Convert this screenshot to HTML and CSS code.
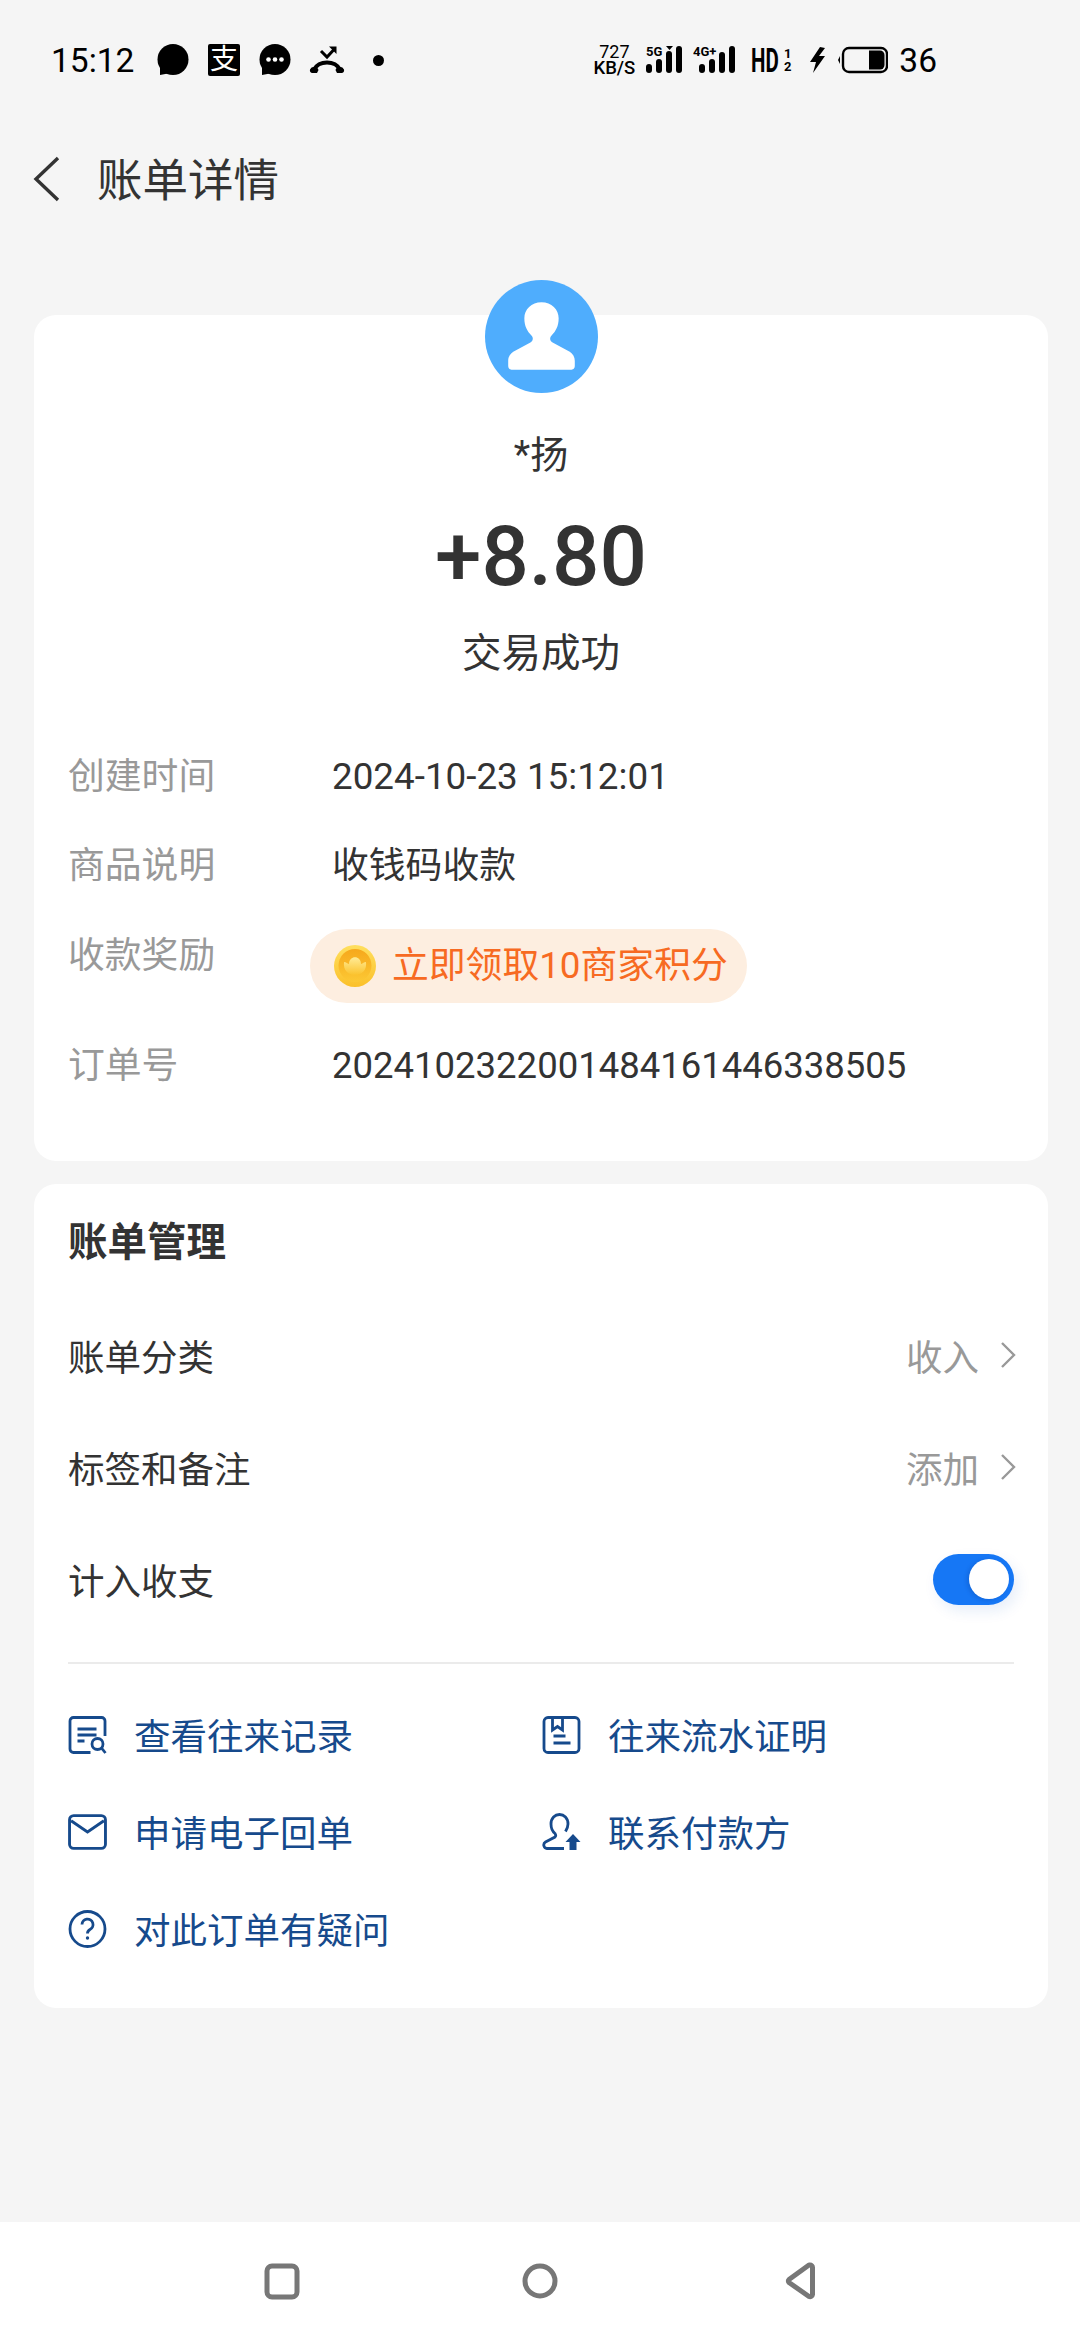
FILE: index.html
```html
<!DOCTYPE html>
<html lang="zh-CN">
<head>
  <meta charset="utf-8">
  <title>账单详情</title>
  <link rel="stylesheet" href="styles.css">
</head>
<body>
<div class="page">

  <!-- status bar -->
  <div class="status-bar">
    <div class="status-left">
      <span class="clock">15:12</span>
      <svg class="st-bubble" viewBox="0 0 32 32"><circle cx="16" cy="15.5" r="15.5"/><path d="M3 22 L3 31 L11 29.5 Z"/></svg>
      <span class="st-alipay">支</span>
      <svg class="st-chat" viewBox="0 0 32 32"><circle cx="16" cy="15.5" r="15.5"/><path d="M3 22 L3 31 L11 29.5 Z"/><circle cx="9.5" cy="15.5" r="2.3" fill="#fff"/><circle cx="16" cy="15.5" r="2.3" fill="#fff"/><circle cx="22.5" cy="15.5" r="2.3" fill="#fff"/></svg>
      <svg class="st-call" viewBox="0 0 36 28"><path d="M5 24 C9 14 27 14 31 24" fill="none" stroke="#000" stroke-width="4.2"/><path d="M1 23.5 a4.5 4.5 0 0 1 8.5 0.5 l-1.5 3 h-5 a3 3 0 0 1 -2 -3.5 z M26.5 24 a4.5 4.5 0 0 1 8.5 -0.5 a3 3 0 0 1 -2 3.5 h-5 z"/><path d="M12 5 L18 11 L25 3.5" fill="none" stroke="#000" stroke-width="3"/><path d="M20 0.5 H27.5 V8 Z"/></svg>
      <span class="st-dot"></span>
    </div>
    <div class="status-right">
      <div class="speed"><span class="speed-num">727</span><span class="speed-unit">KB/S</span></div>
      <svg class="signal" viewBox="0 0 37 30">
        <text x="0" y="11" class="sig-text">5G</text>
        <path d="M20 1h7l-3.5 4z"/>
        <rect x="0" y="19" width="6" height="9" rx="3"/><rect x="10" y="14" width="6" height="14" rx="3"/><rect x="20" y="6" width="6" height="22" rx="3"/><rect x="30" y="1" width="6" height="27" rx="3"/>
      </svg>
      <svg class="signal signal-4g" viewBox="0 0 43 30">
        <text x="0" y="11" class="sig-text">4G+</text>
        <rect x="6" y="19" width="6" height="9" rx="3"/><rect x="16" y="14" width="6" height="14" rx="3"/><rect x="26" y="7" width="6" height="21" rx="3"/><rect x="36" y="1" width="6" height="27" rx="3"/>
      </svg>
      <div class="hd"><span class="hd-text">HD</span><span class="hd-sims"><span>1</span><span>2</span></span></div>
      <svg class="bolt" viewBox="0 0 17 26"><path d="M11 0 L1 15 H7 L4 26 L16 9 H10 L16 1 Z"/></svg>
      <svg class="battery" viewBox="0 0 51 28">
        <path d="M3 10 L1 14 L3 18 Z"/>
        <rect x="6" y="2" width="44" height="24" rx="6" fill="none" stroke="#000" stroke-width="2.4"/>
        <path d="M32 4.5 H43 a4.5 4.5 0 0 1 4.5 4.5 V19 a4.5 4.5 0 0 1 -4.5 4.5 H32 Z"/>
      </svg>
      <span class="battery-num">36</span>
    </div>
  </div>

  <!-- title bar -->
  <div class="title-bar">
    <svg class="back" viewBox="0 0 28 46"><path d="M25 2 L3 23 L25 44" fill="none" stroke="#333" stroke-width="3.4"/></svg>
    <h1>账单详情</h1>
  </div>

  <!-- transaction summary -->
  <div class="card card-summary">
    <svg class="avatar" viewBox="0 0 112 112">
      <circle cx="56" cy="56" r="56" fill="#4fadfd"/>
      <path fill="#fff" d="M56 22 C46 22 39 29 39 38 C39 46 42 51 46 55 C48 57 48 60 45 62 L28 71 C25 73 23 76 23 80 V85 C23 88 25 89 27 89 H85 C87 89 89 88 89 85 V80 C89 76 87 73 84 71 L67 62 C64 60 64 57 66 55 C70 51 73 46 73 38 C73 29 66 22 56 22 Z"/>
    </svg>
    <div class="payer">*扬</div>
    <div class="amount">+8.80</div>
    <div class="result">交易成功</div>

    <div class="info-row info-first">
      <span class="info-label">创建时间</span>
      <span class="info-value">2024-10-23 15:12:01</span>
    </div>
    <div class="info-row">
      <span class="info-label">商品说明</span>
      <span class="info-value">收钱码收款</span>
    </div>
    <div class="info-row info-reward">
      <span class="info-label">收款奖励</span>
      <span class="reward-pill">
        <svg class="coin" viewBox="0 0 42 42">
          <defs>
            <linearGradient id="coinRim" x1="0" y1="0" x2="0" y2="1"><stop offset="0" stop-color="#ffdf5e"/><stop offset="1" stop-color="#fbc02a"/></linearGradient>
            <linearGradient id="coinFace" x1="0" y1="0" x2="0" y2="1"><stop offset="0" stop-color="#f6a81c"/><stop offset="1" stop-color="#fcc834"/></linearGradient>
            <linearGradient id="ingot" x1="0" y1="0" x2="0" y2="1"><stop offset="0" stop-color="#ffeb96"/><stop offset="1" stop-color="#fbc32e"/></linearGradient>
          </defs>
          <circle cx="21" cy="21" r="21" fill="url(#coinRim)"/>
          <circle cx="21" cy="20.5" r="16.5" fill="url(#coinFace)"/>
          <path fill="url(#ingot)" d="M10 17 C12 17 14 19 15 19 C15 10 27 10 27 19 C28 19 30 17 32 17 C33 25 28 30 21 30 C14 30 9 25 10 17 Z"/>
        </svg>
        <span class="reward-text">立即领取10商家积分</span>
      </span>
    </div>
    <div class="info-row info-order">
      <span class="info-label">订单号</span>
      <span class="order-no">2024102322001484161446338505</span>
    </div>
  </div>

  <!-- bill management -->
  <div class="card card-manage">
    <h2>账单管理</h2>
    <div class="manage-row">
      <span>账单分类</span>
      <span class="manage-right">收入<svg class="chev" viewBox="0 0 16 28"><path d="M2 2 L14 14 L2 26" fill="none" stroke="#999" stroke-width="2.4"/></svg></span>
    </div>
    <div class="manage-row">
      <span>标签和备注</span>
      <span class="manage-right">添加<svg class="chev" viewBox="0 0 16 28"><path d="M2 2 L14 14 L2 26" fill="none" stroke="#999" stroke-width="2.4"/></svg></span>
    </div>
    <div class="manage-row">
      <span>计入收支</span>
      <span class="toggle"><span class="toggle-knob"></span></span>
    </div>

    <div class="divider"></div>

    <div class="links">
      <div class="link">
        <svg class="link-icon" viewBox="0 0 38 38" fill="none" stroke="#164a8c" stroke-width="2.8">
          <path d="M36.5 20 V5 a3.5 3.5 0 0 0 -3.5 -3.5 H5 a3.5 3.5 0 0 0 -3.5 3.5 V33 a3.5 3.5 0 0 0 3.5 3.5 H22"/>
          <path d="M9 13 H28 M9 19 H28 M9 25 H16"/>
          <circle cx="29" cy="28" r="5.5"/>
          <path d="M33 32 L37 37"/>
        </svg>
        <span>查看往来记录</span>
      </div>
      <div class="link">
        <svg class="link-icon" viewBox="0 0 38 38" fill="none" stroke="#164a8c" stroke-width="2.8">
          <rect x="1.5" y="1.5" width="35" height="35" rx="4"/>
          <path d="M10 2 V14 L15 10.5 L20 14 V2"/>
          <path d="M11 20 H23 M11 27 H28"/>
        </svg>
        <span>往来流水证明</span>
      </div>
      <div class="link">
        <svg class="link-icon" viewBox="0 0 38 36" fill="none" stroke="#164a8c" stroke-width="2.8">
          <rect x="1.5" y="2" width="35" height="32" rx="4"/>
          <path d="M3 7 L19 18 L35 7"/>
        </svg>
        <span>申请电子回单</span>
      </div>
      <div class="link">
        <svg class="link-icon" viewBox="0 0 39 38" fill="none" stroke="#164a8c" stroke-width="2.8">
          <path d="M22 35.5 H5 a3.5 3.5 0 0 1 -1.5 -6.5 L13 24 c1 -1 1 -2 0 -3.5 C10 18 9 14 9 11 C9 5 13 1.5 17.5 1.5 C22 1.5 26 5 26 11 c0 3 -1 5 -2.5 7.5"/>
          <path fill="#164a8c" stroke="none" d="M31 21 L38.5 29 H34.5 V37 H27.5 V29 H23.5 Z"/>
        </svg>
        <span>联系付款方</span>
      </div>
      <div class="link">
        <svg class="link-icon" viewBox="0 0 38 38" fill="none" stroke="#164a8c" stroke-width="2.8">
          <circle cx="19" cy="19" r="17.5"/>
          <path d="M13.5 14.5 a5.5 5.5 0 1 1 8 5 c-1.8 1 -2.5 2 -2.5 4"/>
          <circle cx="19" cy="28" r="1.7" fill="#164a8c" stroke="none"/>
        </svg>
        <span>对此订单有疑问</span>
      </div>
    </div>
  </div>

  <!-- system navigation -->
  <div class="nav-bar">
    <svg class="nav-icon" viewBox="0 0 40 40"><rect x="5" y="5" width="30" height="31" rx="5"/></svg>
    <svg class="nav-icon" viewBox="0 0 40 40"><circle cx="20" cy="20" r="15"/></svg>
    <svg class="nav-icon" viewBox="0 0 40 40"><path d="M32 4 a2.5 2.5 0 0 1 2.5 2.5 V33.5 a2.5 2.5 0 0 1 -3.5 2 L11 21.5 a2 2 0 0 1 0 -3 L31 4 Z" stroke-linejoin="round"/></svg>
  </div>
</div>
</body>
</html>
```

FILE: styles.css
```css
* {
  box-sizing: border-box;
}
html, body {
  margin: 0;
  padding: 0;
}
body {
  width: 1080px;
  font-family: Roboto, "Noto Sans CJK SC", sans-serif;
  color: #333;
  background: #f5f5f5;
}
.page {
  width: 1080px;
  height: 2340px;
  display: flex;
  flex-direction: column;
  overflow: hidden;
}

/* Status bar */
.status-bar {
  height: 120px;
  display: flex;
  justify-content: space-between;
  align-items: center;
  padding: 0 143px 0 51px;
  color: #000;
}
.status-left,
.status-right {
  display: flex;
  align-items: center;
}
.clock {
  font-size: 33.5px;
  width: 106px;
}
.st-bubble,
.st-chat {
  width: 32px;
  height: 32px;
}
.st-alipay {
  width: 32px;
  height: 32px;
  margin: 0 19px;
  background: #000;
  border-radius: 2px;
  color: #fff;
  font-size: 28px;
  line-height: 31px;
  text-align: center;
}
.st-call {
  width: 36px;
  height: 28px;
  margin-left: 18px;
}
.st-dot {
  width: 11px;
  height: 11px;
  margin-left: 28px;
  border-radius: 50%;
  background: #000;
}
.speed {
  display: flex;
  flex-direction: column;
  align-items: center;
  width: 44px;
  line-height: 16px;
}
.speed-num {
  font-size: 18px;
}
.speed-unit {
  font-size: 18.5px;
  font-weight: 500;
}
.signal {
  width: 37px;
  height: 30px;
  margin-left: 10px;
}
.signal-4g {
  width: 43px;
}
.sig-text {
  font-size: 13px;
  font-weight: 700;
}
.hd {
  display: flex;
  align-items: center;
  width: 41px;
  margin-left: 15px;
}
.hd-text {
  display: inline-block;
  width: 32px;
  font-size: 33px;
  font-weight: 700;
  transform: scaleX(0.62);
  transform-origin: left center;
}
.hd-sims {
  display: flex;
  flex-direction: column;
  align-items: center;
  width: 9px;
  font-size: 13px;
  line-height: 13px;
  font-weight: 700;
}
.bolt {
  width: 17px;
  height: 26px;
  margin-left: 17px;
}
.battery {
  width: 51px;
  height: 28px;
  margin-left: 11px;
}
.battery-num {
  font-size: 33.5px;
  margin-left: 11px;
}

/* Title bar */
.title-bar {
  height: 118px;
  display: flex;
  align-items: center;
  padding-left: 33px;
}
.back {
  width: 28px;
  height: 46px;
}
h1 {
  margin: 0 0 4px 36px;
  font-size: 45.5px;
  font-weight: 400;
  color: #333;
}

/* Cards */
.card {
  margin: 0 32px 0 34px;
  padding: 0 34px;
  background: #fff;
  border-radius: 22px;
}
.card-summary {
  margin-top: 77px;
  padding-bottom: 70px;
  display: flex;
  flex-direction: column;
}
.avatar {
  width: 113px;
  height: 113px;
  margin: -35px auto 0;
  flex: none;
}
.payer,
.result {
  line-height: 50px;
  text-align: center;
}
.payer {
  margin-top: 37px;
  font-size: 38px;
}
.amount {
  margin-top: 27px;
  font-size: 83.5px;
  line-height: 100px;
  font-weight: 500;
  text-align: center;
}
.result {
  margin-top: 22px;
  font-size: 39.5px;
}
.info-row {
  display: flex;
  margin-top: 39px;
  font-size: 36.8px;
  line-height: 50px;
}
.info-first {
  margin-top: 73px;
}
.info-reward {
  margin-top: 40px;
}
.info-order {
  margin-top: 38px;
}
.info-label {
  width: 264px;
  flex: none;
  color: #999;
}
.order-no {
  font-size: 36.5px;
}

/* Reward pill */
.reward-pill {
  display: flex;
  align-items: center;
  height: 74px;
  margin: -2px 0 0 -22px;
  padding: 0 0 0 24px;
  width: 437px;
  flex: none;
  border-radius: 37px;
  background: #fdeee0;
  color: #f76a22;
}
.reward-text {
  white-space: nowrap;
}
.coin {
  width: 42px;
  height: 42px;
  margin-right: 16px;
  flex: none;
}

/* Bill management */
.card-manage {
  margin-top: 23px;
  padding-top: 34px;
  padding-bottom: 31px;
}
h2 {
  margin: 0 0 31px;
  font-size: 39.5px;
  line-height: 50px;
  font-weight: 700;
}
.manage-row {
  height: 112px;
  display: flex;
  justify-content: space-between;
  align-items: center;
  font-size: 36.5px;
}
.manage-right {
  display: flex;
  align-items: center;
  color: #999;
}
.chev {
  width: 16px;
  height: 28px;
  margin: 0 -2px 0 21px;
}
.toggle {
  width: 81px;
  height: 51px;
  display: flex;
  justify-content: flex-end;
  align-items: center;
  padding-right: 5px;
  border-radius: 26px;
  background: #1677f5;
  box-shadow: 4px 6px 14px rgba(22, 90, 200, 0.1);
}
.toggle-knob {
  width: 40px;
  height: 40px;
  border-radius: 50%;
  background: #fff;
  box-shadow: -2px 1px 4px rgba(0, 40, 120, 0.2);
}
.divider {
  height: 2px;
  margin-top: 27px;
  background: #ebebeb;
}
.links {
  display: grid;
  grid-template-columns: 474px 1fr;
  grid-auto-rows: 97px;
  margin-top: 22px;
}
.link {
  display: flex;
  align-items: center;
  gap: 27px;
  font-size: 36.5px;
  color: #164a8c;
}
.link-icon {
  width: 39px;
  height: 38px;
  flex: none;
}

/* System navigation */
.nav-bar {
  margin-top: auto;
  height: 118px;
  display: flex;
  justify-content: center;
  align-items: center;
  gap: 218px;
  background: #fff;
}
.nav-icon {
  width: 40px;
  height: 40px;
  fill: none;
  stroke: #777;
  stroke-width: 5;
}
```
